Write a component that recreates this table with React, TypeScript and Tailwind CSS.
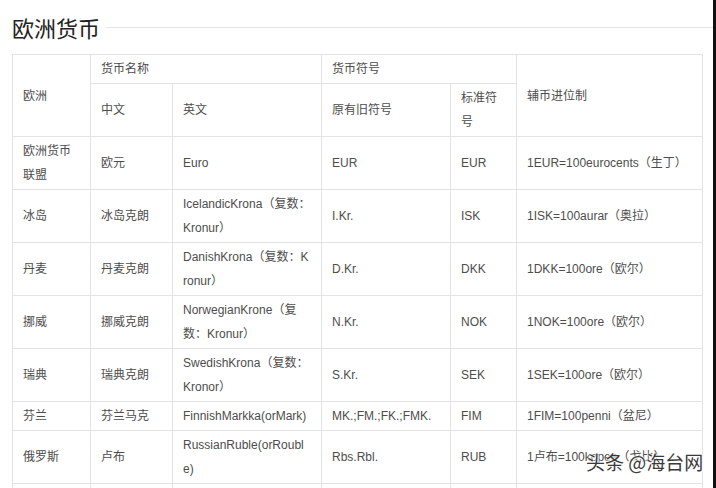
const rows: string[][] = [
  ['欧洲货币联盟', '欧元', 'Euro', 'EUR', 'EUR', '1EUR=100eurocents（生丁）'],
  ['冰岛', '冰岛克朗', 'IcelandicKrona（复数：Kronur）', 'I.Kr.', 'ISK', '1ISK=100aurar（奥拉）'],
  ['丹麦', '丹麦克朗', 'DanishKrona（复数：Kronur）', 'D.Kr.', 'DKK', '1DKK=100ore（欧尔）'],
  ['挪威', '挪威克朗', 'NorwegianKrone（复数：Kronur）', 'N.Kr.', 'NOK', '1NOK=100ore（欧尔）'],
  ['瑞典', '瑞典克朗', 'SwedishKrona（复数：Kronor）', 'S.Kr.', 'SEK', '1SEK=100ore（欧尔）'],
  ['芬兰', '芬兰马克', 'FinnishMarkka(orMark)', 'MK.;FM.;FK.;FMK.', 'FIM', '1FIM=100penni（盆尼）'],
  ['俄罗斯', '卢布', 'RussianRuble(orRouble)', 'Rbs.Rbl.', 'RUB', '1卢布=100kopee（戈比）'],
  ['\u00a0', '\u00a0', '\u00a0', '\u00a0', '\u00a0', '\u00a0'],
]

const cell = 'border border-[#e3e3e3] px-[10px] py-[2px] align-middle font-normal text-left break-all'

export default function App() {
  return (
    <div
      className="flex h-[488px] w-[716px] overflow-hidden bg-white text-[#4d4d4d]"
      style={{ fontFamily: '"Liberation Sans", Arial, "Noto Sans CJK SC", sans-serif' }}
    >
      <div className="relative flex-1 pl-[12px]">
        {/* Title with rule */}
        <div className="flex h-[54px] items-center">
          <h2 className="text-[22px] leading-[28px] text-[#222]" style={{ fontFamily: '"Noto Sans CJK SC", sans-serif' }}>
            欧洲货币
          </h2>
          <div className="ml-[6px] h-px flex-1 bg-[#e6e6e6]" />
        </div>

        <table className="w-[690px] table-fixed border-collapse text-[12px] leading-[24px]">
          <colgroup>
            <col className="w-[78px]" />
            <col className="w-[82px]" />
            <col className="w-[149px]" />
            <col className="w-[129px]" />
            <col className="w-[66px]" />
            <col className="w-[186px]" />
          </colgroup>
          <thead>
            <tr>
              <th rowSpan={2} className={cell}>欧洲</th>
              <th colSpan={2} className={cell}>货币名称</th>
              <th colSpan={2} className={cell}>货币符号</th>
              <th rowSpan={2} className={cell}>辅币进位制</th>
            </tr>
            <tr>
              <th className={cell}>中文</th>
              <th className={cell}>英文</th>
              <th className={cell}>原有旧符号</th>
              <th className={cell}>标准符号</th>
            </tr>
          </thead>
          <tbody>
            {rows.map((r, j) => (
              <tr key={j}>
                {r.map((c, i) => (
                  <td key={i} className={cell}>{c}</td>
                ))}
              </tr>
            ))}
          </tbody>
        </table>

        {/* watermark */}
        <div
          className="absolute left-[586px] top-[449px] whitespace-nowrap text-[19px] leading-[26px] text-[#3a3a3a]"
          style={{
            fontFamily: '"Noto Sans CJK SC", sans-serif',
            textShadow: '0 0 2px #fff, 0 0 2px #fff, 1px 1px 1px #fff',
          }}
        >
          头条 @海台网
        </div>
      </div>
      <div className="w-[3px] bg-[#111]" />
    </div>
  )
}
